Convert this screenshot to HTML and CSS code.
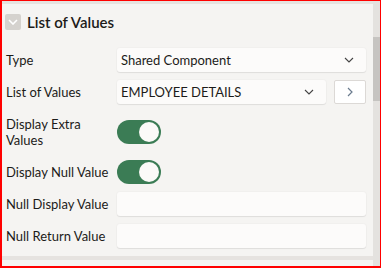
FILE: index.html
```html
<!DOCTYPE html>
<html>
<head>
<meta charset="utf-8">
<link rel="stylesheet" href="styles.css">
</head>
<body>
<div class="frame">
  <div class="content">
    <section class="panel">
      <div class="panel-head">
        <span class="collapse">
          <svg width="10" height="6" viewBox="0 0 10 6"><path d="M1 1l4 4 4-4" fill="none" stroke="#fff" stroke-width="1.6"/></svg>
        </span>
        <span class="title">List of Values</span>
      </div>
      <div class="rows">
        <div class="row">
          <div class="label">Type</div>
          <div class="control">
            <div class="field select"><span class="val">Shared Component</span>
              <svg class="chev" width="10" height="6" viewBox="0 0 10 6"><path d="M1 1l4 4 4-4" fill="none" stroke="#444" stroke-width="1.1"/></svg>
            </div>
          </div>
        </div>
        <div class="row">
          <div class="label">List of Values</div>
          <div class="control">
            <div class="field select grow"><span class="val">EMPLOYEE DETAILS</span>
              <svg class="chev" width="10" height="6" viewBox="0 0 10 6"><path d="M1 1l4 4 4-4" fill="none" stroke="#444" stroke-width="1.1"/></svg>
            </div>
            <div class="btn">
              <svg width="6" height="10" viewBox="0 0 6 10"><path d="M1 1l4 4-4 4" fill="none" stroke="#6a7b8e" stroke-width="1.2"/></svg>
            </div>
          </div>
        </div>
        <div class="row">
          <div class="label">Display Extra<br>Values</div>
          <div class="control"><span class="toggle"><span class="knob"></span></span></div>
        </div>
        <div class="row">
          <div class="label">Display Null Value</div>
          <div class="control"><span class="toggle"><span class="knob"></span></span></div>
        </div>
        <div class="row">
          <div class="label">Null Display Value</div>
          <div class="control"><div class="field"></div></div>
        </div>
        <div class="row">
          <div class="label">Null Return Value</div>
          <div class="control"><div class="field"></div></div>
        </div>
      </div>
    </section>
    <div class="divider"></div>
    <section class="panel next"></section>
  </div>
  <div class="scrollbar"><div class="thumb"></div></div>
</div>
</body>
</html>
```
FILE: styles.css
```css
* { box-sizing: border-box; }
html, body { margin: 0; padding: 0; }
body {
  font-family: Lato, "Liberation Sans", sans-serif;
  font-size: 13px;
  color: #1c1b19;
  background: #fff;
}
.frame {
  width: 381px;
  height: 268px;
  border-style: solid;
  border-color: #ff0000;
  border-width: 1px 1px 2px 2px;
  display: flex;
  background: #e6e3e0;
  overflow: hidden;
}
.content {
  flex: 1;
  display: flex;
  flex-direction: column;
  padding-top: 3px;
}
.panel {
  background: #f5f4f2;
  padding-bottom: 4px;
}
.panel.next { flex: 1; padding: 0; }
.divider { height: 4px; flex: none; }
.panel-head {
  height: 36px;
  display: flex;
  align-items: center;
  padding: 0 0 0 3px;
  gap: 6px;
  margin-bottom: 4px;
}
.collapse {
  width: 16px;
  height: 16px;
  border-radius: 2px;
  background: #d5d2ce;
  display: flex;
  align-items: center;
  justify-content: center;
}
.title {
  font-size: 15px;
  font-weight: 600;
}
.rows { display: flex; flex-direction: column; }
.row {
  display: grid;
  grid-template-columns: 111px 1fr;
  padding: 4px 7px 4px 4px;
  align-items: center;
}
.label {
  padding: 4px 0;
  line-height: 16px;
}
.control {
  display: flex;
  align-items: center;
  gap: 8px;
}
.field {
  flex: 1;
  height: 24px;
  background: #fcfbfa;
  border-radius: 3px;
  box-shadow: 0 1px 1px rgba(0,0,0,0.08), 0 0 0 1px rgba(0,0,0,0.015);
  display: flex;
  align-items: center;
  padding: 0 12px 0 4px;
}
.val { flex: 1; }
.chev { flex: none; }
.btn {
  width: 32px;
  height: 24px;
  flex: none;
  background: #fff;
  border: 1px solid #dcd9d6;
  border-radius: 2px;
  display: flex;
  align-items: center;
  justify-content: center;
}
.toggle {
  width: 44px;
  height: 24px;
  border-radius: 12px;
  background: #3b7c55;
  display: flex;
  justify-content: flex-end;
  align-items: center;
  padding: 2px;
}
.knob {
  width: 20px;
  height: 20px;
  border-radius: 50%;
  background: #fbfaf8;
}
.scrollbar {
  width: 7px;
  flex: none;
  background: #e4e2df;
  padding-top: 36px;
}
.thumb {
  height: 64px;
  background: #c6c4c1;
}
```
